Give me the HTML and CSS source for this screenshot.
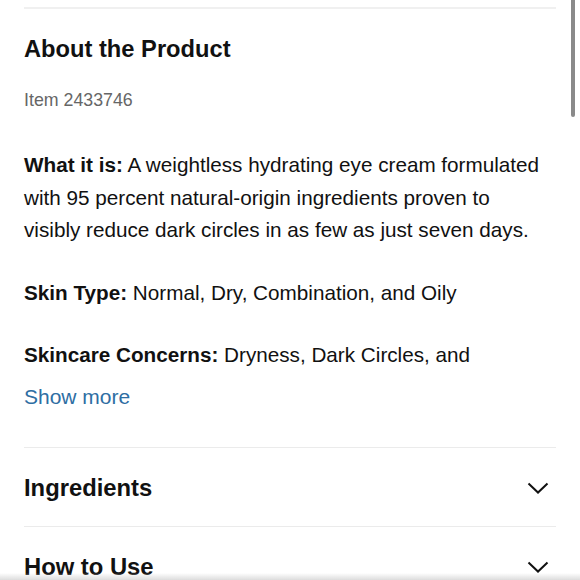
FILE: index.html
```html
<!DOCTYPE html>
<html>
<head>
<meta charset="utf-8">
<link rel="stylesheet" href="styles.css">
</head>
<body>
<div class="page">
  <div class="divider top"></div>
  <h2 class="title">About the Product</h2>
  <div class="item">Item 2433746</div>
  <p class="para first"><b>What it is:</b> A weightless hydrating eye cream formulated with 95 percent natural-origin ingredients proven to visibly reduce dark circles in as few as just seven days.</p>
  <p class="para"><b>Skin Type:</b> Normal, Dry, Combination, and Oily</p>
  <p class="para"><b>Skincare Concerns:</b> Dryness, Dark Circles, and</p>
  <a class="more">Show more</a>
  <div class="divider"></div>
  <div class="row"><span class="rtitle">Ingredients</span><svg class="chev" width="22" height="12" viewBox="0 0 22 12"><path d="M1.5 1.5 L11 10.5 L20.5 1.5" fill="none" stroke="#111" stroke-width="2"/></svg></div>
  <div class="divider"></div>
  <div class="row"><span class="rtitle">How to Use</span><svg class="chev" width="22" height="12" viewBox="0 0 22 12"><path d="M1.5 1.5 L11 10.5 L20.5 1.5" fill="none" stroke="#111" stroke-width="2"/></svg></div>
</div>
<div class="scrollbar"></div>
<div class="bottomshade"></div>
</body>
</html>
```
FILE: styles.css
```css
html, body {
  margin: 0;
  padding: 0;
  background: #fff;
  overflow: hidden;
}
body {
  font-family: "Liberation Sans", Arial, sans-serif;
  color: #111;
  width: 580px;
  height: 580px;
}
.page {
  padding: 0 24px;
}
.divider {
  height: 1px;
  background: #ebebeb;
}
.divider.top {
  margin-top: 7px;
  height: 2px;
  background: #f0f0f0;
}
.title {
  margin: 26px 0 0;
  font-size: 23.7px;
  line-height: 28px;
  font-weight: bold;
}
.item {
  margin-top: 26px;
  font-size: 17.8px;
  line-height: 22px;
  color: #666;
}
.para {
  margin: 30px 0 0;
  max-width: 520px;
  font-size: 20.7px;
  line-height: 32.5px;
}
.para.first {
  margin-top: 38px;
}
.para b {
  font-weight: bold;
}
.more {
  display: block;
  margin-top: 10px;
  font-size: 21px;
  line-height: 30px;
  color: #2e6ea3;
  margin-bottom: 35px;
}
.row {
  height: 78px;
  display: flex;
  align-items: center;
  justify-content: space-between;
  padding-top: 2px;
  box-sizing: border-box;
}
.rtitle {
  font-size: 23.8px;
  font-weight: bold;
  line-height: 28px;
}
.chev {
  margin-right: 7px;
}
.scrollbar {
  position: fixed;
  top: 0;
  right: 5px;
  width: 4px;
  height: 117px;
  background: #8a8a8a;
  border-radius: 0 0 2px 2px;
}
.bottomshade {
  position: fixed;
  left: 0;
  right: 0;
  bottom: 0;
  height: 7px;
  background: linear-gradient(to bottom, rgba(220,220,220,0), #dcdcdc);
}
```
